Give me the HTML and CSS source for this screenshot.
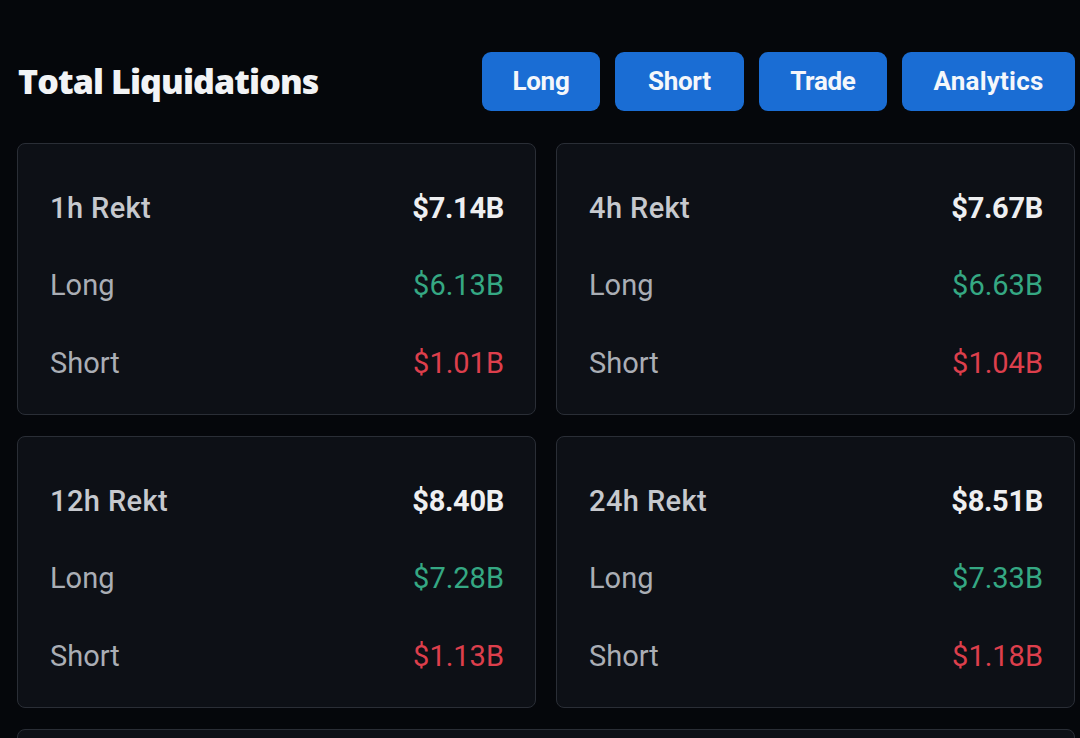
FILE: index.html
```html
<!DOCTYPE html>
<html>
<head>
<meta charset="utf-8">
<link rel="stylesheet" href="styles.css">
</head>
<body>
<div class="page">
  <header class="header">
    <h1 class="title">Total Liquidations</h1>
    <nav class="tabs">
      <a class="tab tab-long">Long</a>
      <a class="tab tab-short">Short</a>
      <a class="tab tab-trade">Trade</a>
      <a class="tab tab-analytics">Analytics</a>
    </nav>
  </header>
  <section class="grid">
    <div class="card">
      <div class="row head"><span class="label">1h Rekt</span><span class="val">$7.14B</span></div>
      <div class="row"><span class="label">Long</span><span class="val up">$6.13B</span></div>
      <div class="row"><span class="label">Short</span><span class="val down">$1.01B</span></div>
    </div>
    <div class="card">
      <div class="row head"><span class="label">4h Rekt</span><span class="val">$7.67B</span></div>
      <div class="row"><span class="label">Long</span><span class="val up">$6.63B</span></div>
      <div class="row"><span class="label">Short</span><span class="val down">$1.04B</span></div>
    </div>
    <div class="card">
      <div class="row head"><span class="label">12h Rekt</span><span class="val">$8.40B</span></div>
      <div class="row"><span class="label">Long</span><span class="val up">$7.28B</span></div>
      <div class="row"><span class="label">Short</span><span class="val down">$1.13B</span></div>
    </div>
    <div class="card">
      <div class="row head"><span class="label">24h Rekt</span><span class="val">$8.51B</span></div>
      <div class="row"><span class="label">Long</span><span class="val up">$7.33B</span></div>
      <div class="row"><span class="label">Short</span><span class="val down">$1.18B</span></div>
    </div>
    <div class="card wide"></div>
  </section>
</div>
</body>
</html>
```

FILE: styles.css
```css
html, body {
  margin: 0;
  padding: 0;
  background: #05070b;
  overflow: hidden;
}
.page {
  width: 1080px;
  height: 738px;
  box-sizing: border-box;
  padding: 52px 5px 0 17px;
  font-family: "Roboto", "Noto Sans", sans-serif;
  overflow: hidden;
}
.header {
  display: flex;
  align-items: center;
  justify-content: space-between;
  height: 59px;
  margin-bottom: 32px;
}
.title {
  margin: 0;
  padding-left: 1px;
  padding-bottom: 1px;
  font-family: "Open Sans", "Noto Sans", sans-serif;
  font-weight: 800;
  font-size: 34px;
  letter-spacing: -0.9px;
  color: #f2f3f5;
}
.tabs {
  display: flex;
  gap: 15px;
}
.tab {
  display: flex;
  align-items: center;
  justify-content: center;
  height: 59px;
  box-sizing: border-box;
  padding: 0 30.5px 2px;
  background: #1a6dd4;
  border-radius: 9px;
  color: #f4f7fb;
  font-weight: 700;
  font-size: 26px;
  letter-spacing: -0.3px;
}
.tab-short {
  padding: 0 33px 2px;
}
.tab-trade {
  padding: 0 31.5px 2px;
}
.tab-analytics {
  padding: 0 31.5px 2px;
  letter-spacing: 0.2px;
}
.grid {
  display: grid;
  grid-template-columns: 519px 519px;
  column-gap: 20px;
  row-gap: 21px;
}
.card {
  box-sizing: border-box;
  height: 272px;
  background: #0d1016;
  border: 1.5px solid #2a2e36;
  border-radius: 8px;
  padding: 25px 31px 14px 32px;
  display: flex;
  flex-direction: column;
}
.card.wide {
  grid-column: 1 / span 2;
}
.row {
  height: 77.5px;
  flex: none;
  display: flex;
  align-items: center;
  justify-content: space-between;
  font-size: 29px;
}
.label {
  color: #aaaeb5;
}
.head .label {
  color: #c6c9ce;
  font-weight: 500;
  letter-spacing: 0.4px;
}
.val {
  color: #eeeff1;
  font-weight: 500;
}
.head .val {
  font-weight: 700;
  letter-spacing: -0.3px;
}
.val.up {
  color: #35a883;
  font-weight: 400;
}
.val.down {
  color: #dd3f4c;
  font-weight: 400;
}
```
